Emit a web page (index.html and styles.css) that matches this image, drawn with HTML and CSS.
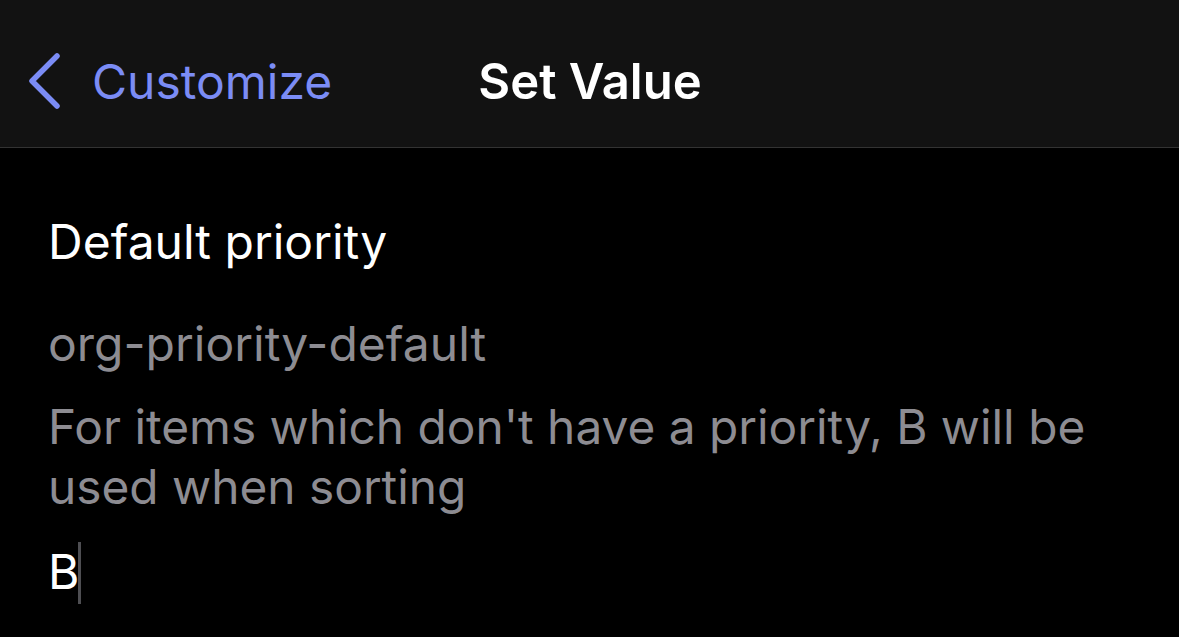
FILE: index.html
```html
<!DOCTYPE html>
<html>
<head>
    <title>Set Value</title>
    <link rel="stylesheet" href="styles.css">
</head>
<body>
    <div class="nav-bar">
        <div class="nav-back">
            <svg class="chevron" width="36" height="58" viewBox="0 0 36 58">
                <path d="M31 4 L6 29 L31 54" fill="none" stroke="#7b8cf5" stroke-width="5.5" stroke-linecap="round" stroke-linejoin="round"/>
            </svg>
            <span class="back-label">Customize</span>
        </div>
        <div class="nav-title">Set Value</div>
        <div class="nav-spacer"></div>
    </div>
    <div class="content">
        <div class="setting-title">Default priority</div>
        <div class="setting-var">org-priority-default</div>
        <div class="setting-desc">For items which don't have a priority, B will be used when sorting</div>
        <div class="setting-input">B<span class="caret"></span></div>
    </div>
</body>
</html>
```

FILE: styles.css
```css
body {
    margin: 0;
    background-color: #000;
    font-family: Inter, "Noto Sans", sans-serif;
    color: #fff;
    height: 637px;
    overflow: hidden;
}
.nav-bar {
    display: grid;
    grid-template-columns: 1fr auto 1fr;
    align-items: start;
    height: 148px;
    background-color: #121212;
    border-bottom: 1px solid #333;
    padding: 52px 26px 0 26px;
    box-sizing: border-box;
}
.nav-back {
    display: flex;
    align-items: flex-start;
    gap: 30px;
    color: #7b8cf5;
    font-size: 48px;
    line-height: 58px;
}
.chevron {
    display: block;
}
.back-label {
    margin-top: 1px;
}
.nav-title {
    font-size: 49px;
    font-weight: 600;
    line-height: 58px;
    margin-top: 1px;
    margin-left: 1px;
}
.content {
    padding: 64px 48px 0 48px;
}
.setting-title {
    font-size: 48px;
    line-height: 60px;
}
.setting-var {
    font-size: 48px;
    line-height: 60px;
    color: #8d8c92;
    margin-top: 42px;
}
.setting-desc {
    font-size: 47.8px;
    line-height: 60px;
    color: #8d8c92;
    margin-top: 23px;
}
.setting-input {
    font-size: 48px;
    line-height: 60px;
    margin-top: 25px;
}
.caret {
    display: inline-block;
    width: 3px;
    height: 62px;
    background-color: #4e4e52;
    margin-left: -1px;
    vertical-align: -15px;
}
```
